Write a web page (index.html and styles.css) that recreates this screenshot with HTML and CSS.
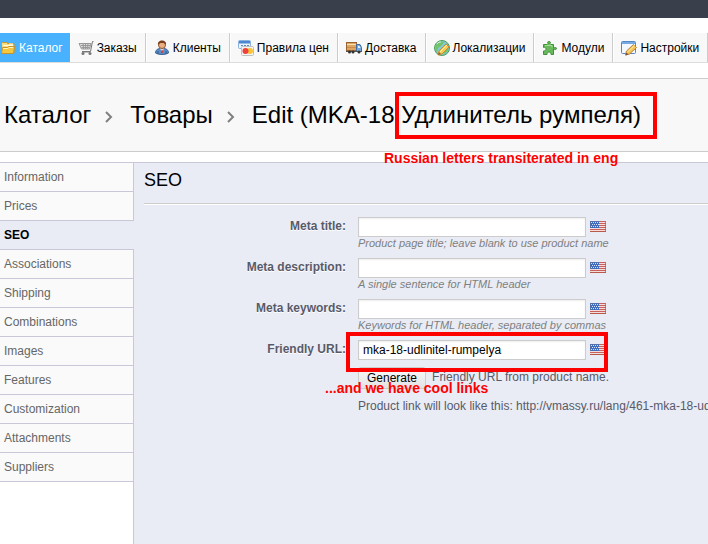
FILE: index.html
```html
<!DOCTYPE html>
<html lang="ru">
<head>
    <meta charset="UTF-8">
    <meta name="viewport" content="width=device-width, initial-scale=1.0">
    <title>Edit product</title>
    <link rel="stylesheet" href="styles.css">
</head>
<body>
    <svg class="defs" width="0" height="0" aria-hidden="true">
        <symbol id="flag" viewBox="0 0 16 11">
            <rect width="16" height="11" fill="#f3dede"/>
            <path d="M0 .5h16M0 2.5h16M0 4.5h16M0 6.5h16M0 8.5h16M0 10.5h16" stroke="#c8605c"/>
            <rect width="9" height="7" fill="#3d6cc0"/>
            <path d="M1 1.5h8M2 3.5h7M1 5.5h8" stroke="#d5e3fa" stroke-dasharray="1 1"/>
            <path d="M.5 7V.5H9" fill="none" stroke="#5570a8"/>
            <path d="M0 10.5h16M15.500 1v10" fill="none" stroke="#b3573f" opacity=".7"/>
        </symbol>
    </svg>

    <div class="topbar"></div>

    <nav>
        <ul class="menu">
            <li class="active"><a href="#">
                <svg width="16" height="16" viewBox="0 0 16 16"><path d="M1.500 13V3.500l1-1h4l1 1H14v9.500z" fill="#f7dc80" stroke="#c9962e"/><path d="M3 5.500h10M9 4h4" stroke="#fffbe0"/><path d="M1.500 13.500l1-6h5l1-1h6l-1 7z" fill="#f5c842" stroke="#c9932a"/><path d="M3 8.500h5l1-1h4" fill="none" stroke="#fff3b4"/></svg>
                Каталог</a></li>
            <li><a href="#">
                <svg width="16" height="16" viewBox="0 0 16 16"><path d="M1 3.500h12L11.500 9H3.500z" fill="#ddd" stroke="#999"/><path d="M3 5.500h9M3.500 7.500h8M5 3.500L5.500 9M7.500 3.500V9M10 3.500L9.500 9" stroke="#999"/><path d="M15.500 1.500h-1L12.500 11.500H4" fill="none" stroke="#777"/><path d="M4 12.500h8" stroke="#bbb"/><circle cx="5" cy="13.500" r="1.500" fill="#777"/><circle cx="12" cy="13.500" r="1.500" fill="#777"/></svg>
                Заказы</a></li>
            <li><a href="#">
                <svg width="16" height="16" viewBox="0 0 16 16"><path d="M1.500 13c0-3 2-4.500 5-4.500h3c3 0 5 1.500 5 4.500-3 2-10 2-13 0z" fill="#5a8fc9" stroke="#3a6496"/><path d="M6 8.500h4L8 12z" fill="#fff"/><path d="M7.500 9.500h1l.5 3-1 1-1-1z" fill="#cf3a36"/><path d="M4 11v3M12 11v3" stroke="#305987"/><circle cx="8" cy="5" r="3.500" fill="#e9b083" stroke="#96572f"/><path d="M4 5C3.500 2 5.500.5 8 .5S12.500 2 12 5c-1-1.500-2-2-4-2S5 3.500 4 5z" fill="#7a3f1c"/></svg>
                Клиенты</a></li>
            <li><a href="#">
                <svg width="16" height="16" viewBox="0 0 16 16"><rect x=".5" y=".5" width="12" height="8" rx="1" fill="#e8f1fc" stroke="#8bb1de"/><path d="M1 1h11v2.500H1z" fill="#4c86d2"/><path d="M3 5.500h8" stroke="#5b88c7" stroke-dasharray="2 1"/><rect x="3.500" y="6.500" width="12" height="9" rx="1" fill="#f3f3f3" stroke="#c0c0c0"/><circle cx="12" cy="11" r="3" fill="#fac436"/><circle cx="7.500" cy="11" r="3" fill="#ee3f38"/></svg>
                Правила цен</a></li>
            <li><a href="#">
                <svg width="16" height="16" viewBox="0 0 16 16"><rect x=".5" y="2.500" width="10" height="8" fill="#dda763" stroke="#966331"/><path d="M1 4.500h9" stroke="#f8deae"/><path d="M1 7.500h9" stroke="#c98b47"/><path d="M10.500 4.500h3.500l1.500 3v4h-5z" fill="#74a9df" stroke="#426c9f"/><path d="M12 6h1.500l1 2H12z" fill="#e4f3ff"/><path d="M0 11.500h16" stroke="#555"/><circle cx="3.500" cy="12" r="1.500" fill="#333"/><circle cx="7" cy="12" r="1.500" fill="#333"/><circle cx="13" cy="12" r="1.500" fill="#333"/></svg>
                Доставка</a></li>
            <li><a href="#">
                <svg width="16" height="16" viewBox="0 0 16 16"><circle cx="8" cy="8" r="7.500" fill="#82c8d8" stroke="#4d9c5b"/><path d="M2 5c2-4 6-4 8-3L7 6 4 8l-1 4C1 10 1 7 2 5zM9 8l4-5c2 2 2 5 1 8l-4 3z" fill="#72c567"/><path d="M3 4c1-2 3-2 4-2" fill="none" stroke="#d6f2df"/><path d="M4 15l1-4 7-7 3 3-7 7z" fill="#f5cb55" stroke="#c48e30"/><path d="M6 12l7-7" stroke="#fff0ad"/><path d="M4 15l1-3 2 2z" fill="#8c6233"/></svg>
                Локализации</a></li>
            <li><a href="#">
                <svg width="16" height="16" viewBox="0 0 16 16"><path d="M1.500 4.500H5l1-1C5 2 6 1.500 7 1.500s2 .5 1 2l1 1h2.500V8c1-.5 3-1 3 .5s-2 1-3 .5v5.500H9c0-1.500-.5-2.500-2-2.500s-2 1-2 2.500H1.500v-3.500c2 0 2.500-1 2.500-2S3 7 1.500 7.500z" fill="#69b85c" stroke="#3e9139"/><path d="M3 5.500h7v2" fill="none" stroke="#a5df91"/></svg>
                Модули</a></li>
            <li><a href="#">
                <svg width="16" height="16" viewBox="0 0 16 16"><rect x=".5" y="1.500" width="14" height="12" rx="1" fill="#f3f8ff" stroke="#5287c8"/><path d="M1 2h13v2H1z" fill="#79a9e3"/><path d="M4.500 15l1-4 7-6.500 3 3-7 6.500z" fill="#f6c65b" stroke="#bd812c"/><path d="M6.500 12l7-6.500" stroke="#ffe9a8"/><path d="M4.500 15.500l1-3 2 2z" fill="#765337"/></svg>
                Настройки</a></li>
        </ul>
    </nav>

    <header class="page-title">
        <a href="#">Каталог</a>
        <svg width="8" height="14" viewBox="0 0 8 14"><path d="M1 2l5 5-5 5" fill="none" stroke="#808080" stroke-width="2"/></svg>
        <a href="#">Товары</a>
        <svg width="8" height="14" viewBox="0 0 8 14"><path d="M1 2l5 5-5 5" fill="none" stroke="#808080" stroke-width="2"/></svg>
        <h1>Edit (MKA-18 Удлинитель румпеля)</h1>
    </header>

    <div class="product">
        <aside class="tabs">
            <a href="#">Information</a>
            <a href="#">Prices</a>
            <a href="#" class="selected">SEO</a>
            <a href="#">Associations</a>
            <a href="#">Shipping</a>
            <a href="#">Combinations</a>
            <a href="#">Images</a>
            <a href="#">Features</a>
            <a href="#">Customization</a>
            <a href="#">Attachments</a>
            <a href="#">Suppliers</a>
        </aside>

        <main class="panel">
            <h2>SEO</h2>
            <form>
                <div class="row">
                    <label for="meta_title">Meta title:</label>
                    <div class="field">
                        <div class="control"><input type="text" id="meta_title"><svg width="16" height="11"><use href="#flag"/></svg></div>
                        <p class="hint">Product page title; leave blank to use product name</p>
                    </div>
                </div>
                <div class="row">
                    <label for="meta_description">Meta description:</label>
                    <div class="field">
                        <div class="control"><input type="text" id="meta_description"><svg width="16" height="11"><use href="#flag"/></svg></div>
                        <p class="hint">A single sentence for HTML header</p>
                    </div>
                </div>
                <div class="row">
                    <label for="meta_keywords">Meta keywords:</label>
                    <div class="field">
                        <div class="control"><input type="text" id="meta_keywords"><svg width="16" height="11"><use href="#flag"/></svg></div>
                        <p class="hint">Keywords for HTML header, separated by commas</p>
                    </div>
                </div>
                <div class="row">
                    <label for="link_rewrite">Friendly URL:</label>
                    <div class="field">
                        <div class="control"><input type="text" id="link_rewrite" value="mka-18-udlinitel-rumpelya"><svg width="16" height="11"><use href="#flag"/></svg></div>
                        <div class="generate"><button type="button">Generate</button><span>Friendly URL from product name.</span></div>
                        <p class="link">Product link will look like this: http://vmassy.ru/lang/461-mka-18-udlinitel-rumpelya.html</p>
                    </div>
                </div>
            </form>
        </main>
    </div>

    <!-- red marks over the page -->
    <div class="mark mark-name"></div>
    <div class="note note-name">Russian letters transiterated in eng</div>
    <div class="mark mark-url"></div>
    <div class="note note-url">...and we have cool links</div>
</body>
</html>
```

FILE: styles.css
```css
body {
    font-family: "Liberation Sans", Arial, sans-serif;
    font-size: 12px;
    color: #585a69;
    background-color: #fff;
    margin: 0;
    min-height: 100vh;
    display: flex;
    flex-direction: column;
    position: relative;
    overflow: hidden;
}

a {
    color: inherit;
    text-decoration: none;
}

svg {
    flex: none;
}

.defs {
    position: absolute;
}

.topbar {
    height: 18px;
    background-color: #3a404b;
}

/* main menu */
.menu {
    display: flex;
    list-style: none;
    margin: 15px 0;
    padding: 0;
    border-bottom: 1px solid #ddd;
    color: #000;
}

.menu li {
    flex: none;
    margin-left: 1px;
    border-right: 1px solid #ccc;
    background-color: #f8f8f8;
}

.menu a {
    display: flex;
    align-items: center;
    gap: 3px;
    height: 29px;
    padding: 0 8px 0 7px;
    white-space: nowrap;
}

.menu .active {
    margin-left: 0;
    border-right: 0;
    background-color: #49b2ff;
    color: #fff;
}

.menu .active a {
    padding: 0 7px 0 0;
}

/* breadcrumb title */
.page-title {
    display: flex;
    align-items: center;
    height: 72px;
    padding-left: 4px;
    border-top: 1px solid #ccc;
    border-bottom: 1px solid #ccc;
    background-color: #f8f8f8;
    color: #000;
    font-size: 24px;
    white-space: nowrap;
}

.page-title svg {
    margin: 4px 17px 0 14px;
}

h1 {
    margin: 0;
    font-size: 24px;
    font-weight: normal;
}

/* tabs and form */
.product {
    flex: 1;
    display: flex;
    margin-top: 10px;
    border-top: 1px solid #c8c8d8;
}

.tabs {
    flex: 0 0 133px;
}

.tabs a {
    display: block;
    padding: 0 4px;
    line-height: 28px;
    color: #666;
    background-color: #fafafa;
    border-bottom: 1px solid #c8c8d8;
}

.tabs .selected {
    position: relative;
    margin-right: -1px;
    color: #000;
    font-weight: bold;
    background-color: #e9ecf5;
}

.panel {
    flex: 1;
    min-width: 0;
    padding-left: 10px;
    border-left: 1px solid #c8c8d8;
    background-color: #e9ecf5;
}

h2 {
    margin: 0 0 13px;
    padding: 6px 0 12px;
    border-bottom: 1px solid #ccc;
    box-shadow: 0 1px 0 #fff;
    color: #000;
    font-size: 18px;
    font-weight: normal;
    line-height: 22px;
}

.row {
    display: flex;
    gap: 12px;
    margin-bottom: 8px;
}

label {
    flex: 0 0 202px;
    line-height: 18px;
    text-align: right;
    font-weight: bold;
    text-shadow: 0 1px 0 #fff;
}

.field {
    flex: 1;
    min-width: 0;
}

.control {
    display: flex;
    align-items: center;
    gap: 4px;
}

.control svg {
    margin-bottom: 2px;
}

input {
    box-sizing: border-box;
    width: 228px;
    height: 20px;
    padding: 0 4px;
    border: 1px solid #ccc;
    background-color: #fff;
    box-shadow: inset 0 1px 2px #eee;
    color: #000;
    font: inherit;
}

.hint {
    margin: 0;
    color: #7f7f7f;
    font-size: 11px;
    font-style: italic;
    line-height: 13px;
    white-space: nowrap;
}

.generate {
    display: flex;
    gap: 6px;
    margin-top: 7px;
    line-height: 20px;
    white-space: nowrap;
}

button {
    height: 22px;
    padding: 0 8px;
    border: 1px solid #ccc;
    border-radius: 3px;
    background: linear-gradient(#f9f9f9, #e3e3e3);
    color: #000;
    font: inherit;
}

.link {
    margin: 8px 0 0;
    line-height: 18px;
    white-space: nowrap;
    overflow: hidden;
}

/* red marks */
.mark {
    position: absolute;
    box-sizing: border-box;
    border: 4px solid #f00;
}

.mark-name {
    left: 395px;
    top: 92px;
    width: 262px;
    height: 47px;
}

.mark-url {
    left: 346px;
    top: 332px;
    width: 262px;
    height: 40px;
}

.note {
    position: absolute;
    color: #f00;
    font-size: 14px;
    font-weight: bold;
    line-height: 16px;
    white-space: nowrap;
}

.note-name {
    left: 384px;
    top: 150px;
}

.note-url {
    left: 325px;
    top: 380px;
}
```
